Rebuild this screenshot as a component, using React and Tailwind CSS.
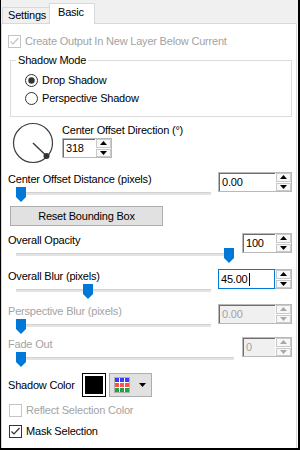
import React from "react";

const gray = "text-[#a3a3a3]";

const Check = ({ checked, disabled }) => (
  <svg width="13" height="13" viewBox="0 0 13 13" className="shrink-0">
    <rect x="0.5" y="0.5" width="12" height="12" fill="white" stroke={disabled ? "#c4c4c4" : "#333333"} />
    {checked && (
      <polyline points="2.5,6.5 5,9 10.5,3" fill="none" stroke={disabled ? "#c4c4c4" : "#333333"} strokeWidth="1.2" />
    )}
  </svg>
);

const Radio = ({ checked }) => (
  <svg width="13" height="13" viewBox="0 0 13 13" className="shrink-0">
    <circle cx="6.5" cy="6.5" r="6" fill="white" stroke="#333333" />
    {checked && <circle cx="6.5" cy="6.5" r="3.2" fill="#333333" />}
  </svg>
);

const Arrow = ({ up, disabled }) => (
  <svg width="7" height="4" viewBox="0 0 7 4">
    <polygon points={up ? "0,4 7,4 3.5,0" : "0,0 7,0 3.5,4"} fill={disabled ? "#a8a8a8" : "#000"} />
  </svg>
);

const Spin = ({ value, width, disabled, focused }) => (
  <div className={`flex h-[20px] shrink-0 border border-[#b9b9b9] bg-white ${width}`}>
    {focused ? (
      <div className="relative -my-px -ml-px flex flex-1 items-center border border-[#0078d7] pl-[2px]">
        <span>{value}</span>
        <span className="ml-[1px] h-[13px] w-px bg-black" />
      </div>
    ) : (
      <div
        className={`flex flex-1 items-center border-t border-l border-[#6e6e6e] pl-[2px] ${
          disabled ? "bg-[#f0f0f0] text-[#a3a3a3]" : ""
        }`}
      >
        {value}
      </div>
    )}
    <div className="ml-px flex w-[15px] flex-col gap-px">
      <div className="flex flex-1 items-center justify-center border border-[#c8c8c8] bg-[#f8f8f8]">
        <Arrow up disabled={disabled} />
      </div>
      <div className="flex flex-1 items-center justify-center border border-[#c8c8c8] bg-[#f8f8f8]">
        <Arrow disabled={disabled} />
      </div>
    </div>
  </div>
);

const Thumb = ({ left }) => (
  <svg width="10" height="15" viewBox="0 0 10 15" className="absolute top-[-6px]" style={{ left }}>
    <polygon points="0,0 10,0 10,10 5,15 0,10" fill="#0078d7" />
  </svg>
);

const SliderRow = ({ label, spin, trackW, thumb, disabled, className }) => (
  <div className={`flex flex-col ${className}`}>
    <div className="flex items-start justify-between">
      <span className={`mt-[1px] ${disabled ? gray : ""}`}>{label}</span>
      {spin}
    </div>
    <div className={`relative ml-[8px] h-[3px] bg-[#e3e3e3] border-t border-[#d2d2d2] ${trackW}`}>
      <Thumb left={thumb} />
    </div>
  </div>
);

export default function App() {
  return (
    <div className="flex h-[450px] w-[300px] flex-col border-l border-r-2 border-b-2 border-black bg-white font-['Liberation_Sans',Arial,sans-serif] text-[11px] leading-[13px] tracking-[-0.2px] text-black">
      {/* tabs */}
      <div className="flex h-[23px] items-end bg-[#f0f0f0] pl-[1px]">
        <div className="flex h-[16px] w-[47px] items-center border-t border-l border-[#d9d9d9] pl-[5px]">Settings</div>
        <div className="relative z-10 -mb-px h-[21px] w-[46px] border-t border-l border-r border-[#d9d9d9] bg-white pl-[8px] pt-[2px]">
          Basic
        </div>
        <div className="flex-1" />
      </div>

      {/* panel */}
      <div className="mr-px flex flex-1 flex-col border-t border-l border-r border-[#d9d9d9] pl-[6px] pr-[4px]">
        <div className="mt-[10px] flex h-[14px] items-center gap-[4px]">
          <Check checked disabled />
          <span className={gray}>Create Output In New Layer Below Current</span>
        </div>

        <fieldset className="ml-[2px] mt-[6px] border border-[#dcdcdc] pb-[11px]">
          <legend className="ml-[5px] px-[2px] leading-[13px]">Shadow Mode</legend>
          <div className="mt-[6px] flex h-[14px] items-center gap-[4px] pl-[14px]">
            <Radio checked />
            <span>Drop Shadow</span>
          </div>
          <div className="mt-[4px] flex h-[14px] items-center gap-[4px] pl-[14px]">
            <Radio />
            <span>Perspective Shadow</span>
          </div>
        </fieldset>

        <div className="mt-[5px] flex h-[42px]">
          <svg width="42" height="42" viewBox="0 0 42 42" className="ml-[4px] shrink-0">
            <circle cx="21" cy="21" r="19.5" fill="none" stroke="#3c3c3c" strokeWidth="1.2" />
            <line x1="21" y1="21" x2="34.5" y2="34" stroke="#3c3c3c" strokeWidth="1.4" />
            <circle cx="34.5" cy="34" r="3" fill="#333333" />
          </svg>
          <div className="ml-[8px] flex flex-col pt-[2px]">
            <span>Center Offset Direction (°)</span>
            <div className="mt-[1px]">
              <Spin value="318" width="w-[50px]" />
            </div>
          </div>
        </div>

        <SliderRow
          className="mt-[8px]"
          label="Center Offset Distance (pixels)"
          spin={<Spin value="0.00" width="w-[74px]" />}
          trackW="w-[195px]"
          thumb={0}
        />

        <button className="ml-[2px] mt-[11px] h-[20px] w-[153px] border border-[#adadad] bg-[#e1e1e1] text-center">
          Reset Bounding Box
        </button>

        <SliderRow
          className="mt-[7px]"
          label="Overall Opacity"
          spin={<Spin value="100" width="w-[50px]" />}
          trackW="w-[218px]"
          thumb={208}
        />

        <SliderRow
          className="mt-[13px]"
          label="Overall Blur (pixels)"
          spin={<Spin value="45.00" width="w-[74px]" focused />}
          trackW="w-[195px]"
          thumb={67}
        />

        <SliderRow
          className="mt-[12px]"
          label="Perspective Blur (pixels)"
          disabled
          spin={<Spin value="0.00" width="w-[74px]" disabled />}
          trackW="w-[195px]"
          thumb={0}
        />

        <SliderRow
          className="mt-[10px]"
          label="Fade Out"
          disabled
          spin={<Spin value="0" width="w-[50px]" disabled />}
          trackW="w-[218px]"
          thumb={0}
        />

        <div className="mt-[13px] flex h-[24px] items-center">
          <span className="w-[74px]">Shadow Color</span>
          <div className="h-[24px] w-[24px] border border-black bg-white p-[2px]">
            <div className="h-full w-full bg-black" />
          </div>
          <button className="ml-[3px] flex h-[24px] w-[43px] items-center border border-[#adadad] bg-[#e1e1e1] pl-[4px]">
            <svg width="16" height="16" viewBox="0 0 16 16">
              <rect x="0.5" y="0.5" width="15" height="15" fill="white" stroke="#b0b0b0" />
              {[1, 6, 11].map((x) => (
                <React.Fragment key={x}>
                  <rect x={x} y="1" width="4" height="4" fill="#3a3aff" />
                  <rect x={x} y="6" width="4" height="4" fill="#ff4f4f" />
                  <rect x={x} y="11" width="4" height="4" fill="#24a043" />
                </React.Fragment>
              ))}
            </svg>
            <svg width="7" height="4" viewBox="0 0 7 4" className="ml-[9px]">
              <polygon points="0,0 7,0 3.5,4" fill="#000" />
            </svg>
          </button>
        </div>

        <div className="mt-[6px] flex h-[14px] items-center gap-[4px] pl-[1px]">
          <Check disabled />
          <span className={gray}>Reflect Selection Color</span>
        </div>

        <div className="mt-[7px] flex h-[14px] items-center gap-[4px] pl-[1px]">
          <Check checked />
          <span>Mask Selection</span>
        </div>
      </div>
    </div>
  );
}
